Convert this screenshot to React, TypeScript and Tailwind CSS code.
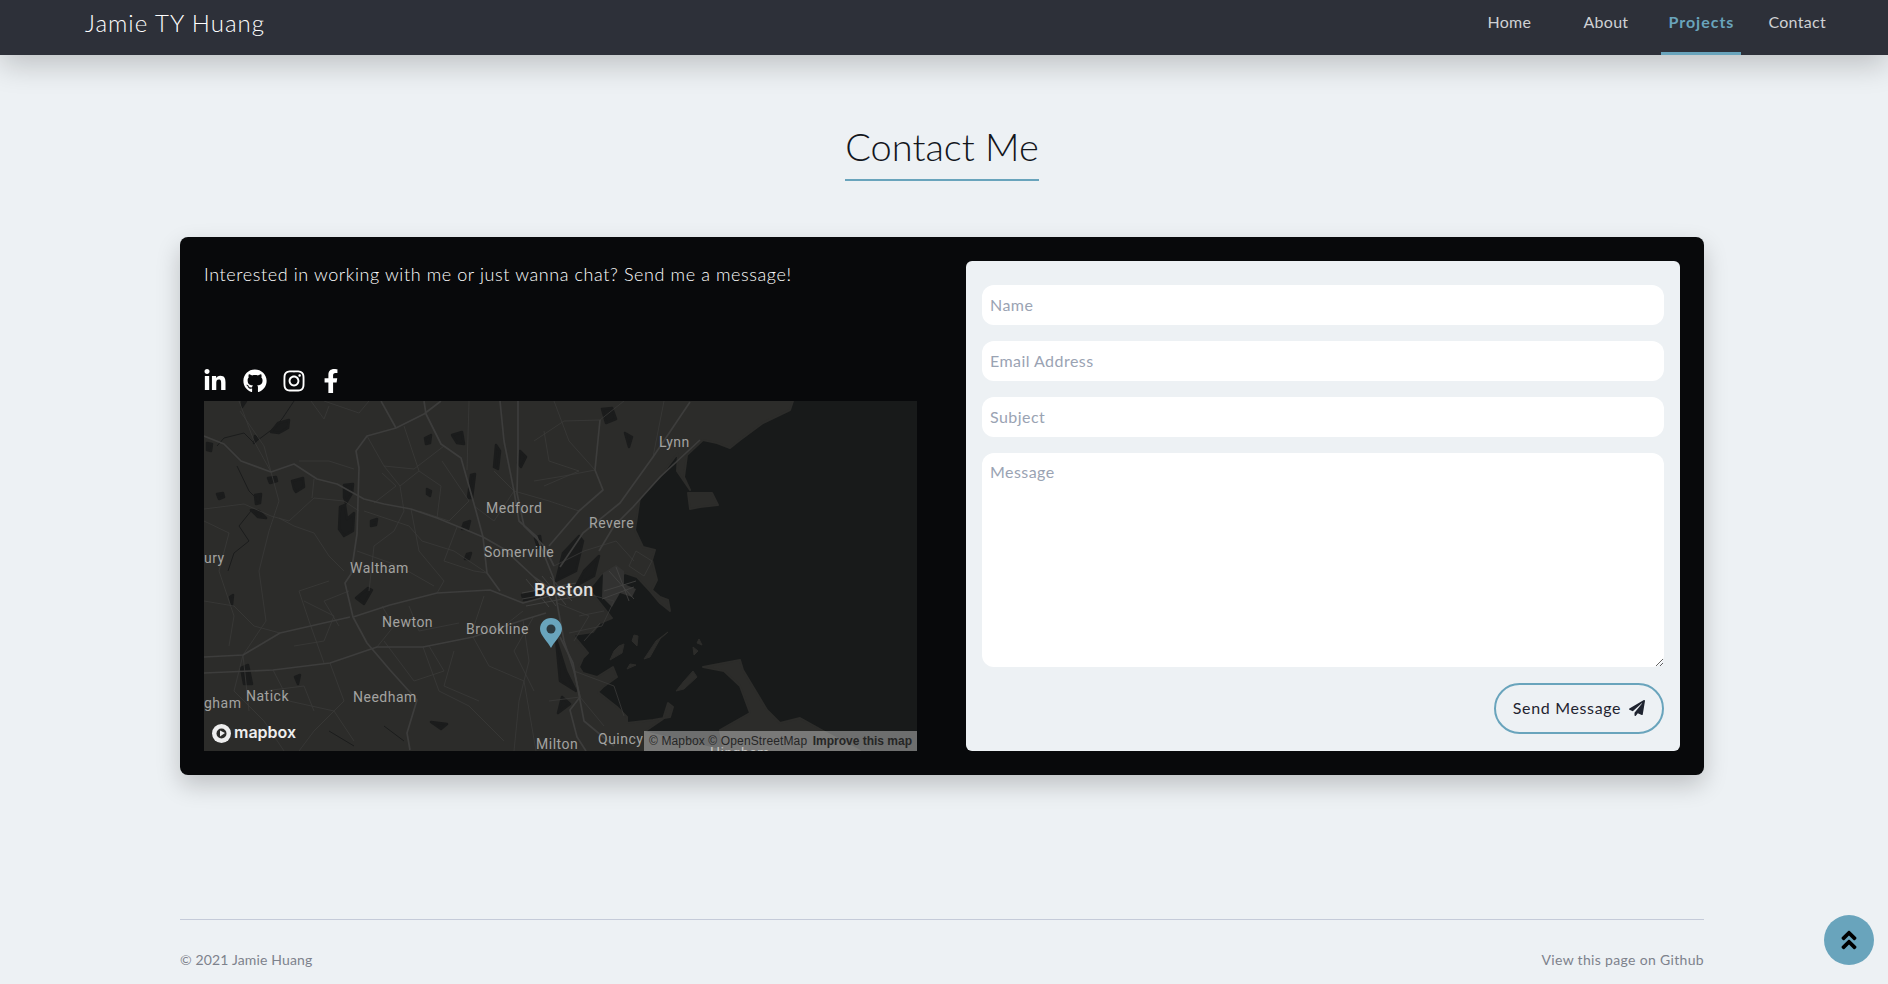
import {FaAngleDoubleUp, FaFacebookF, FaGithub, FaInstagram, FaLinkedinIn, FaPaperPlane} from "react-icons/fa";

const raleway = "font-['Lato','Open_Sans',sans-serif]";

const majorRoads = [
    "M0 35L20 43L37 60L67 71L90 63L113 78L133 83L160 98L180 103L207 108L233 117L260 128L279 136L300 148L330 176L350 190",
    "M206 349L203 332L213 299L186 269L163 242L149 216L141 182L147 173L153 133L155 67L152 50L163 35L192 27L220 13L237 0",
    "M296 0L300 40L310 90L315 120L333 136L349 176L353 202L360 240L370 270L376 296L366 309L373 336L382 350",
    "M314 0L314 49L313 92L320 125L340 145L350 165",
    "M149 216L186 204L233 192L286 189L319 202L345 195L372 190",
    "M0 256L39 254L76 232L146 216",
    "M0 272L69 269L126 262L173 246L219 246L269 236L319 219L342 212",
    "M486 1L449 56L416 102L379 132L356 166",
    "M496 39L456 76L429 106L410 125L395 150",
    "M220 0L222 13L237 43L257 57L272 110L279 136L283 172L296 190",
    "M396 19L391 69L399 89L375 110L345 145",
    "M410 345L380 320L369 262L356 236",
    "M177 0L192 27",
];

const minorRoads = [
    "M35 0L50 40L67 71L75 100L65 130L55 170L62 220L39 254L45 310",
    "M36 10L60 45L67 71",
    "M107 0L120 18L125 5",
    "M0 108L40 103L67 115L85 120L110 97L140 100L155 110",
    "M75 117L90 125L110 132L125 155L140 170",
    "M110 78L108 97",
    "M120 0L155 12L165 0",
    "M95 60L125 60L150 68",
    "M163 35L180 65L196 85L200 110L190 130L170 145L165 190",
    "M180 65L210 68L240 45",
    "M200 25L215 70L237 85L233 117",
    "M196 85L215 70",
    "M178 72L192 85L170 102",
    "M207 108L215 150L240 180L233 192",
    "M153 150L195 165L230 185",
    "M160 110L205 125L218 140L250 150L283 172",
    "M120 262L105 220L95 190L125 180",
    "M0 120L25 132L15 170L30 215L25 245",
    "M69 269L85 300L130 310L150 340",
    "M173 246L190 225L178 205",
    "M219 246L235 290L265 305L300 340",
    "M269 236L285 265L320 280L332 350",
    "M319 219L325 260L315 300L310 350",
    "M0 200L30 205L50 225L76 232",
    "M39 254L30 290L60 320L80 350",
    "M126 262L140 300L110 330L95 350",
    "M253 126L240 160L270 170L283 172",
    "M330 80L360 75L391 69",
    "M310 90L345 100L375 110",
    "M350 0L365 40L391 69",
    "M420 0L396 19L360 20L330 40",
    "M460 0L449 56",
    "M265 0L263 69",
    "M350 165L380 150L412 140L430 160",
    "M372 190L410 200L398 225L365 232",
    "M353 202L385 215L370 240",
    "M370 270L410 285L420 315",
    "M345 300L376 296L400 325",
    "M432 150L448 160L440 175L425 165Z",
    "M238 60L265 100L245 120L215 110",
    "M290 70L310 90L290 120L270 105",
    "M340 30L345 60L375 70L340 85",
    "M100 200L130 215L120 240L90 245",
    "M180 240L210 280L240 270L225 245",
    "M250 250L240 285L275 300",
    "M60 290L100 285L110 310",
    "M135 225L120 200L145 190",
    "M205 205L215 230L255 222",
    "M280 195L270 225L300 225L319 210",
    "M330 215L310 250L330 290",
    "M380 240L396 222",
    "M375 215L400 210",
];

// dense downtown streets around the harbour
const cityStreets = [
    "M322 178L345 206M330 176L352 205M338 175L362 204M346 176L368 200M318 192L372 182M318 198L376 188M322 205L380 194",
    "M405 170L430 198M412 166L425 200M400 190L432 180M398 198L430 186",
];

const landmarks: [string, number, number, number?, string?][] = [
    ["Lynn", 455, 46],
    ["Medford", 282, 112],
    ["Revere", 385, 127],
    ["Somerville", 280, 156],
    ["Boston", 330, 195, 18, "#e0e0e0"],
    ["Waltham", 146, 172],
    ["ury", 0, 162],
    ["Newton", 178, 226],
    ["Brookline", 262, 233],
    ["Natick", 42, 300],
    ["gham", 0, 307],
    ["Needham", 149, 301],
    ["Milton", 332, 348],
    ["Quincy", 394, 343],
    ["Hingham", 506, 357],
];

const ponds = [
    "M67 31L74 22L85 19L84 27L75 32Z",
    "M88 80L99 77L100 86L92 91L90 88Z",
    "M64 77L72 76L73 80L66 82Z",
    "M136 106L141 104L143 118L150 112L149 130L140 135L135 128Z",
    "M140 84L149 83L148 92L142 102L140 96Z",
    "M13 93L19 92L20 96L15 98Z",
    "M51 94L57 93L56 102L52 103Z",
    "M47 109L55 110L62 117L54 116Z",
    "M167 120L173 118L172 124L167 125Z",
    "M248 34L258 31L260 43L253 42Z",
    "M223 88L227 90L226 95L223 93Z",
    "M3 42L8 43L7 50L3 49Z",
    "M51 35L54 37L50 42Z",
    "M38 0L42 0L38 6Z",
    "M221 37L227 34L226 42L222 43Z",
    "M292 44L296 50L294 68L290 66Z",
    "M316 50L322 56L317 66L314 62Z",
    "M267 74L271 73L268 97L264 97Z",
    "M260 122L266 120L264 128L258 128Z",
    "M263 153L267 152L265 158L261 158Z",
    "M331 137L336 135L338 148L334 146Z",
    "M359 152L375 135L379 140L372 170L352 180Z",
    "M152 197L164 187L168 189L160 203Z",
    "M26 196L29 194L28 204Z",
    "M37 267L44 264L48 283L40 283Z",
    "M91 276L96 274L94 283Z",
    "M398 8L408 7L412 18L402 22Z",
    "M421 32L428 36L425 46Z",
    "M352 238L362 270L372 290L356 280Z",
    "M380 170L395 155L390 175L372 185Z",
    "M318 194L345 189L350 194L320 199Z",
    "M227 321L243 323L237 328Z",
    "M358 296L366 303L354 312Z",
];

const rivers = [
    "M13 45L20 37L40 32L50 42L66 30L78 18L90 0",
    "M33 65L45 90L55 100M47 110L35 125L45 140L30 152L24 170",
    "M180 325L200 340M125 330L150 345",
];

const islands = [
    "M464 231L456 238L446 256L440 258L452 240Z",
    "M430 234L434 235L433 245L428 240Z",
    "M415 245L420 243L418 252L406 259L410 250Z",
    "M495 238L498 244L493 242Z",
    "M489 246L494 250L490 254Z",
    "M426 263L432 264L423 268Z",
    "M489 270L493 276L480 288L472 290L480 280Z",
];

const MapPanel = () => (
    <div className="relative h-[350px] w-[713px] overflow-hidden bg-[#181a1a]">
        <svg viewBox="0 0 713 350" width="713" height="350" className="block">
            {/* land */}
            <g fill="#2c2c2a" stroke="#2c2c2a" strokeWidth="2" strokeLinejoin="round">
                <path d="M0 0H589L586 9L559 22L536 39L526 47L513 42L499 39L483 54L480 76L486 89L473 70L474 52L456 76L436 96L431 129L439 146L451 149L448 159L453 179L448 189L456 196L464 199L466 210L456 202L446 190L433 176L421 172L412 178L398 172L385 188L408 217L396 222L389 231L369 234L384 252L379 257L375 266L379 272L393 276L409 266L413 276L399 286L394 291L413 306L423 316L423 322L449 319L466 316L469 306L464 302L459 318L440 331L520 350H0Z" />
                <path d="M484 92L508 92L514 104L496 106L486 108Z" />
                <path d="M499 266L520 262L536 259L539 269L563 309L576 322L596 317L623 332L656 350H520L516 329L546 312L536 285L520 270Z" />
            </g>
            {/* airport */}
            <path fill="#323231" d="M399 172L412 164L420 170L420 183L432 188L428 196L416 192L408 206L398 196Z" />
            <g fill="#2c2c2a" stroke="#2c2c2a" strokeWidth="1" strokeLinejoin="round">
                {islands.map((d) => (
                    <path key={d} d={d} />
                ))}
            </g>
            <g fill="#1b1c1c" stroke="#1b1c1c" strokeWidth="2.500" strokeLinejoin="round">
                {ponds.map((d) => (
                    <path key={d} d={d} />
                ))}
            </g>
            {rivers.map((d) => (
                <path key={d} d={d} fill="none" stroke="#1b1c1c" strokeWidth="1" />
            ))}
            {minorRoads.map((d) => (
                <path key={d} d={d} fill="none" stroke="#3a3a39" strokeWidth="0.8" />
            ))}
            {cityStreets.map((d) => (
                <path key={d} d={d} fill="none" stroke="#454544" strokeWidth="0.8" />
            ))}
            {majorRoads.map((d) => (
                <path key={d} d={d} fill="none" stroke="#3d3d3c" strokeWidth="1.700" strokeLinejoin="round" />
            ))}
            {landmarks.map(([name, x, y, size, color]) => (
                <text
                    key={name}
                    x={x}
                    y={y}
                    fill={color ?? "#a3a3a1"}
                    fontSize={size ?? 14}
                    fontWeight={size ? 500 : 400}
                    fontFamily="Roboto, sans-serif"
                    letterSpacing="0.5"
                >
                    {name}
                </text>
            ))}
            {/* location pin */}
            <path
                fill="#69a4bc"
                d="M347 247C344 241 336 234 336 228C336 221.500 341 217 347 217C353 217 358 221.500 358 228C358 234 350 241 347 247Z"
            />
            <circle cx="347" cy="228" r="4.500" fill="#2c3a40" />
            {/* mapbox logo */}
            <circle cx="17.500" cy="332.500" r="9.500" fill="#eeeeee" />
            <circle cx="17.500" cy="332.500" r="5" fill="#2c2c2a" />
            <path d="M16 329.500L21 332L16 335.500Z" fill="#eeeeee" />
            <text x="30" y="337" fill="#eeeeee" fontSize="16" fontWeight="600" fontFamily="Inter, sans-serif">
                mapbox
            </text>
        </svg>
        <div className="absolute bottom-0 right-0 flex h-5 w-[273px] items-center justify-between whitespace-nowrap bg-white/[0.37] px-[5px] font-['Liberation_Sans',sans-serif] text-xs tracking-[0.13px] text-[#262626]">
            <span>© Mapbox © OpenStreetMap</span>
            <span className="font-bold tracking-normal">Improve this map</span>
        </div>
    </div>
);

const fieldClass =
    "block h-10 w-full rounded-xl bg-white px-2 pb-[2px] text-base tracking-[0.45px] text-gray-800 outline-none placeholder:text-[#9aa3b3]";

export default function App() {
    return (
        <div className={`relative min-h-[984px] bg-[#edf1f4] ${raleway}`}>
            {/* Navbar */}
            <header className="relative z-10 flex h-[55px] items-center justify-between bg-[#2d3039] pl-[85px] shadow-[0_10px_30px_rgba(0,0,0,0.2)]">
                <span className="pb-[10px] text-2xl font-light leading-none tracking-[1px] text-white">Jamie TY Huang</span>
                <nav className="flex h-full items-center text-base tracking-[0.3px] text-[#cfd1d4]">
                    <a className="w-[96px] pb-[11px]">Home</a>
                    <a className="w-[78px] pb-[11px]">About</a>
                    <a className="flex h-full w-20 items-center justify-center border-b-[3px] border-[#69a4bc] pb-2 font-bold tracking-[1px] text-[#69a4bc]">
                        Projects
                    </a>
                    <a className="ml-[27px] mr-[62px] pb-[11px]">Contact</a>
                </nav>
            </header>

            <main className="ml-[180px] w-[1524px]">
                {/* Heading */}
                <div className="flex justify-center pt-[68px]">
                    <h1 className="border-b-2 border-[#69a4bc] pb-[9px] text-[38px] font-light leading-[47px] text-[#13161c]">
                        Contact Me
                    </h1>
                </div>

                {/* Contact card */}
                <section className="mt-14 flex justify-between rounded-lg bg-[#08090b] p-6 shadow-[0_10px_25px_rgba(0,0,0,0.2)]">
                    <div className="flex w-[713px] flex-col">
                        <p className="text-lg font-light leading-[26px] tracking-[0.6px] text-white">
                            Interested in working with me or just wanna chat? Send me a message!
                        </p>
                        <div className="mt-[82px] flex h-8 items-start text-white">
                            <FaLinkedinIn className="-ml-[1px] h-6 w-6" />
                            <FaGithub className="ml-[16px] h-6 w-6" />
                            <FaInstagram className="ml-[15px] h-6 w-6" />
                            <FaFacebookF className="ml-[13px] h-6 w-6" />
                        </div>
                        <MapPanel />
                    </div>

                    <form className="flex h-[490px] w-[714px] flex-col gap-4 rounded-md bg-[#edf1f4] px-4 pt-6">
                        <input className={fieldClass} placeholder="Name" />
                        <input className={fieldClass} placeholder="Email Address" />
                        <input className={fieldClass} placeholder="Subject" />
                        <textarea
                            className="block h-[214px] w-full rounded-xl bg-white px-2 pt-[7px] text-base tracking-[0.45px] text-gray-800 outline-none placeholder:text-[#9aa3b3]"
                            placeholder="Message"
                        />
                        <div className="flex justify-end">
                            <button
                                type="button"
                                className="flex h-[51px] w-[170px] items-center justify-center gap-2 rounded-full border-2 border-[#69a4bc] pb-[2px] text-base tracking-[0.65px] text-[#1f2430]"
                            >
                                Send Message
                                <FaPaperPlane className="h-4 w-4" />
                            </button>
                        </div>
                    </form>
                </section>

                {/* Footer */}
                <footer className="mt-[144px] flex justify-between border-t border-[#c5cbd9] pt-[30px] text-sm tracking-[0.15px] text-[#7d828c]">
                    <span>© 2021 Jamie Huang</span>
                    <a className="tracking-[0.33px]">View this page on Github</a>
                </footer>
            </main>

            {/* Scroll to top */}
            <button
                type="button"
                className="absolute left-[1824px] top-[915px] flex h-[50px] w-[50px] items-center justify-center rounded-full bg-[#69a4bc] text-2xl text-black"
            >
                <FaAngleDoubleUp />
            </button>
        </div>
    );
}
